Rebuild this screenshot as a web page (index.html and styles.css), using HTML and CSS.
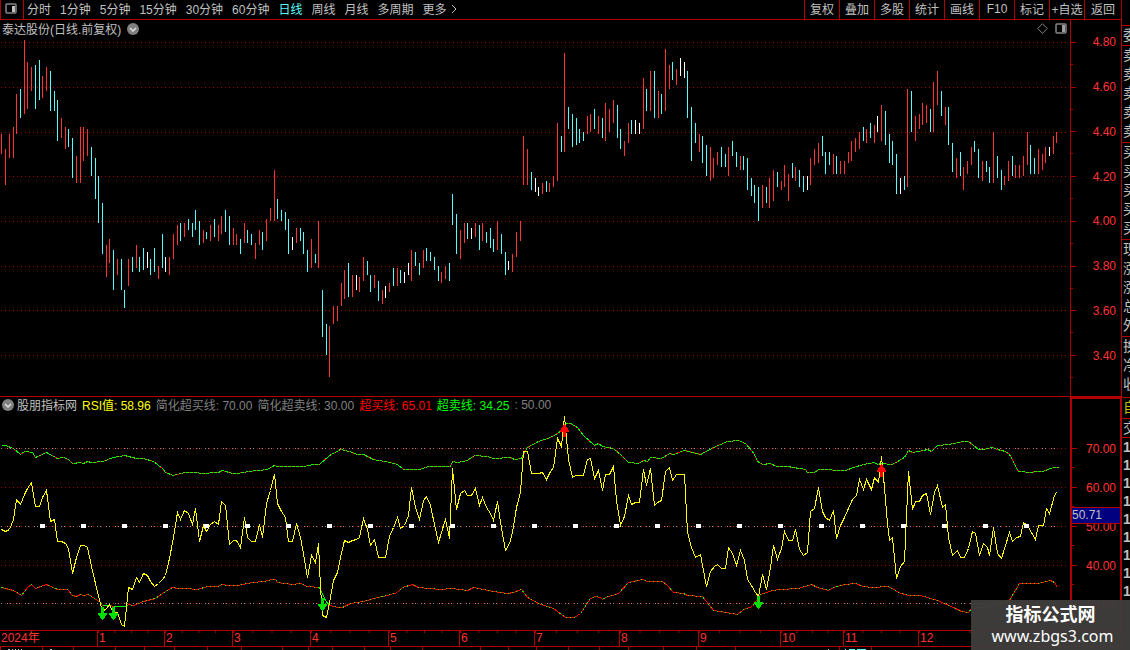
FILE: index.html
```html
<!DOCTYPE html>
<html lang="zh-CN">
    <head>
        <meta charset="utf-8">
        <title>泰达股份 日线</title>
        <link rel="stylesheet" href="styles.css">
    </head>
    <body>
        <svg class="defs">
            <symbol id="up" viewBox="0 0 9 13"><path d="M4 0H5L9 7V8H6V13H3V8H0V7Z" fill="#f00"/></symbol>
            <symbol id="down" viewBox="0 0 9 13"><path d="M3 0H6V6H9V7L5 13H4L0 7V6H3Z" fill="#00e000"/></symbol>
        </svg>
        <div class="app">
            <main>
                <nav class="toolbar">
                    <button class="layout" aria-label="布局">
                        <svg width="12" height="11"><rect x="1" y="1" width="10" height="9" rx="1" fill="none" stroke="#858585" stroke-width="1.5"/><rect x="7" y="3" width="3" height="6" fill="#c0c0c0"/></svg>
                    </button>
                    <div class="periods">
                        <button>分时</button>
                        <button>1分钟</button>
                        <button>5分钟</button>
                        <button>15分钟</button>
                        <button>30分钟</button>
                        <button>60分钟</button>
                        <button class="active">日线</button>
                        <button>周线</button>
                        <button>月线</button>
                        <button>多周期</button>
                        <button class="more">更多<svg width="6" height="10"><path d="M1 1L5 5L1 9" fill="none" stroke="#c0c0c0"/></svg></button>
                    </div>
                    <div class="tools">
                        <button>复权</button>
                        <button>叠加</button>
                        <button>多股</button>
                        <button>统计</button>
                        <button>画线</button>
                        <button>F10</button>
                        <button>标记</button>
                        <button>+自选</button>
                        <button>返回</button>
                    </div>
                </nav>

                <section class="panel price">
                    <div class="plot">
                        <div class="title">
                            <h1>泰达股份(日线.前复权)</h1>
                            <svg width="12" height="12"><circle cx="6" cy="6" r="6" fill="#808080"/><path d="M3 5L6 8L9 5" fill="none" stroke="#e0e0e0" stroke-width="1.5"/></svg>
                            <div class="icons">
                                <svg width="11" height="11"><path d="M5.5 .7L10.3 5.5L5.5 10.3L.7 5.5Z" fill="none" stroke="#858585"/></svg>
                                <svg width="12" height="11"><rect x="1" y="1" width="10" height="9" rx="1" fill="none" stroke="#858585" stroke-width="1.5"/><rect x="7" y="2" width="3" height="7" fill="#a0a0a0"/></svg>
                            </div>
                        </div>
                        <svg class="chart k" viewBox="0 40 1070 356" preserveAspectRatio="none">
                            <path class="grid" transform="translate(0 .5)" d="M1 42H1068M1 87H1068M1 132H1068M1 176H1068M1 221H1068M1 266H1068M1 310H1068M1 355H1068"/>
                            <g transform="translate(.5 0)">
                                <path class="rise" d="M1 134V154M5 149V185M9 134V158M13 127V158M16 94V134M24 40V114M27 62V109M31 67V91M42 76V98M46 67V91M61 118V138M65 127V149M76 156V183M80 127V183M83 127V161M87 129V156M106 245V277M109 239V263M117 259V275M128 259V286M136 245V268M158 266V279M169 257V275M173 234V259M177 225V245M184 223V237M203 230V243M210 225V241M218 225V241M221 216V234M233 228V245M236 234V245M244 223V243M255 243V259M259 230V245M266 219V241M270 208V221M274 170V221
                                M296 228V243M311 239V268M318 221V268M329 326V377M333 306V324M337 306V321M341 283V306M344 270V299M352 275V297M359 277V292M363 257V281M374 275V288M382 290V304M389 283V292M397 268V286M411 250V281M423 250V268M441 272V283M445 266V279M460 230V259M464 223V243M475 223V237M482 223V241M497 221V250M512 254V272M516 232V257M520 221V241M523 136V185M527 149V185M542 183V194M549 183V192M553 176V187M557 123V181
                                M564 53V152M587 116V134M590 114V132M598 116V134M605 103V141M609 109V132M613 100V123M624 141V156M628 123V143M643 78V129M650 71V111M658 91V118M665 49V111M669 65V89M676 69V85M699 134V152M710 147V181M713 158V178M717 152V165M728 147V176M740 156V170M762 185V208M769 178V208M773 170V201M781 181V190M784 165V187M788 174V201M795 167V181M810 158V185M814 149V165M818 143V163
                                M833 154V174M840 161V174M844 161V174M848 152V163M851 141V161M855 138V152M859 132V149M866 129V143M874 125V143M881 105V141M907 89V187M915 116V141M919 114V129M922 103V125M926 105V123M933 82V132M937 71V105M945 107V125M956 158V178M963 167V190M967 161V174M971 147V165M982 161V181M993 132V183M1004 176V185M1008 161V181M1015 165V178M1019 165V178M1023 156V176M1027 132V165M1038 149V174M1042 154V170M1045 147V163M1053 136V154M1056 132V143"/>
                                <path class="fall" d="M20 89V118M35 65V109M39 60V100M50 71V111M54 91V111M57 100V141M68 129V147M72 138V178M91 147V176M95 158V199M98 176V223M102 203V254M113 250V290M121 259V290M124 290V308M132 257V272M139 257V272M143 248V270M150 259V275M154 248V272M162 234V268M180 223V241M188 219V230M192 223V237M195 210V230M199 221V245M206 232V239M214 219V237M225 210V232M229 216V245M240 239V254M247 230V243M251 234V245M262 232V250M277 199V219
                                M281 210V221M285 212V230M288 219V254M300 228V241M303 232V254M307 250V272M315 254V263M322 290V337M326 324V355M348 263V297M367 261V275M370 275V292M378 281V301M393 268V286M400 270V283M415 252V266M419 263V275M426 248V261M430 252V261M434 257V270M438 266V281M449 263V281M452 194V225M456 214V254M467 223V239M479 225V250M486 232V243M490 228V248M493 239V252M501 234V254M505 252V275M531 172V190M546 181V192
                                M561 136V152M568 107V129M572 114V147M576 118V145M579 129V143M583 132V141M594 109V129M602 118V138M617 105V138M620 129V149M631 120V134M646 89V111M654 71V118M661 94V114M672 62V80M687 71V118M691 107V161M695 123V143M702 136V163M706 145V176M721 147V167M725 154V167M732 141V156M736 152V167M743 156V170M747 158V190M751 178V196M754 185V203M758 187V221M766 187V203M777 172V187M792 163V178M799 170V187M803 176V192
                                M822 136V156M825 152V174M829 152V165M836 156V174M863 127V141M870 123V138M885 111V145M889 134V163M892 141V165M896 154V194M904 176V190M911 91V132M930 109V132M941 91V116M948 107V145M952 143V172M960 152V176M974 141V152M978 149V178M986 161V172M989 167V183M997 156V178M1001 170V190M1012 156V176M1030 145V174M1034 158V174"/>
                                <path class="flat" d="M147 252V268M165 257V272M292 237V250M356 275V290M385 286V298M404 272V283M408 263V275M471 228V239M508 261V270M535 178V192M538 187V196M635 120V134M639 123V134M680 58V76M684 62V78M807 176V190M877 116V132M900 178V194M1049 147V156"/>
                            </g>
                        </svg>
                    </div>
                    <ul class="axis">
                        <li>4.80</li>
                        <li>4.60</li>
                        <li>4.40</li>
                        <li>4.20</li>
                        <li>4.00</li>
                        <li>3.80</li>
                        <li>3.60</li>
                        <li>3.40</li>
                    </ul>
                </section>

                <section class="panel rsi">
                    <div class="plot">
                        <div class="legend">
                            <svg width="12" height="12"><circle cx="6" cy="6" r="6" fill="#808080"/><path d="M3 5L6 8L9 5" fill="none" stroke="#e0e0e0" stroke-width="1.5"/></svg>
                            <h2>股朋指标网</h2>
                            <span class="yellow">RSI值: 58.96</span>
                            <span>简化超买线: 70.00</span>
                            <span>简化超卖线: 30.00</span>
                            <span class="red">超买线: 65.01</span>
                            <span class="green">超卖线: 34.25</span>
                            <span>: 50.00</span>
                        </div>
                        <svg class="chart r" viewBox="0 414 1070 216" preserveAspectRatio="none">
                            <g transform="translate(.5 .5)">
                                <path class="grid" transform="translate(-.5 0)" d="M1 448H1068M1 487H1068M1 526H1068M1 565H1068M1 603H1068"/>
                                <path class="level" transform="translate(-.5 0)" d="M1 448H1057M1 526H1057M1 603H1057"/>
                                <g class="over">
                                    <polyline id="top" points="1,445 5,445 13,448 20,454 24,451 32,452 35,457 46,452 57,458 63,457 68,459 72,463 80,462 83,463 87,461 91,462 102,461 113,457 124,455 136,458 143,458 153,461 162,468 165,472 173,475 184,472 197,472 200,473 218,472 222,470 232,473 237,473 248,471 267,469 274,465 277,466 303,466 313,464 319,464 329,455 340,449 349,451 357,454 363,454 373,459 390,462 397,464 403,469 419,469 428,466 450,466 452,461 457,462 467,460 474,455 487,456 493,458 510,457 514,459 521,458 524,452 527,447 538,441 550,437 557,433 561,430 565,423 570,423 577,427 583,435 594,445 598,443 602,446 613,448 621,455 628,462 638,463 643,460 647,461 650,457 661,458 669,453 673,454 684,450 700,454 713,447 727,441 738,440 745,443 752,451 758,462 763,464 769,463 777,466 787,466 805,469 807,472 814,472 818,469 845,470 853,467 863,464 874,462 877,464 881,463 892,464 904,457 908,450 912,452 923,450 927,449 931,451 937,445 948,444 963,441 968,441 978,449 983,449 992,447 997,449 1005,451 1009,454 1018,471 1031,472 1035,471 1042,471 1053,467 1058,467"/>
                                    <use class="dash" href="#top"/>
                                </g>
                                <g class="under">
                                    <polyline id="low" points="1,587 13,590 21,595 27,587 31,584 35,588 46,584 57,589 67,589 72,595 76,596 80,594 83,595 88,594 100,602 102,605 110,605 113,606 125,606 128,604 133,605 143,601 155,598 165,591 172,587 178,588 185,588 197,589 207,586 217,586 222,584 227,585 237,585 252,582 263,581 272,579 275,579 277,582 292,584 300,583 307,586 319,587 325,600 329,605 338,607 342,607 350,603 363,601 377,597 383,596 397,592 402,587 412,584 418,587 440,589 452,588 467,590 473,587 493,591 507,593 513,592 521,589 527,597 538,603 553,608 565,617 574,617 580,613 590,598 595,596 600,597 602,599 605,597 618,593 628,582 642,579 647,581 662,581 667,585 673,592 683,593 687,595 702,596 713,610 737,614 743,609 752,606 760,594 772,590 780,589 798,588 811,584 817,587 828,590 833,587 844,584 855,583 863,586 872,587 887,586 892,588 898,592 908,595 920,595 937,600 953,607 961,611 968,612 971,608 990,606 1009,600 1019,583 1037,583 1050,580 1054,582 1057,587"/>
                                    <use class="dash" href="#low"/>
                                    <path class="flatline" d="M102 605H110M113 606H125M319 587L325 600L329 605"/>
                                </g>
                                <polyline class="value" points="1,529 5,531 9,529 13,519 16,499 20,504 24,494 27,488 31,482 35,506 39,506 42,497 46,490 50,521 54,519 57,541 61,541 65,543 68,548 72,573 76,557 80,545 84,545 87,547 91,566 95,583 98,596 102,611 106,608 109,604 113,613 117,612 121,624 124,626 128,587 132,589 136,577 139,582 143,573 147,575 150,581 154,586 158,583 162,579 165,575 169,558 173,537 177,512 180,519 184,510 188,513 192,524 195,508 199,541 203,525 206,531 210,524 214,521 218,524 221,501 225,505 229,544 233,540 236,540 240,547 244,517 247,537 251,541 255,541 259,524 262,537 266,503 270,490 274,474 277,503 281,511 285,517 288,541 292,541 296,523 300,537 303,553 307,577 311,555 315,562 318,543 320,587 322,615 326,617 329,602 333,580 337,572 340,557 344,540 348,542 352,540 356,539 359,537 363,518 367,529 370,545 374,539 378,557 385,557 389,536 393,527 397,517 400,528 404,525 408,515 411,487 415,507 419,519 423,500 426,496 430,505 434,524 438,542 441,532 445,519 449,538 452,468 456,509 460,493 464,490 467,495 471,495 475,488 479,505 482,497 486,507 490,513 493,520 497,501 501,528 505,550 509,543 512,532 516,507 520,492 523,451 527,451 531,473 538,473 542,472 546,479 550,471 553,467 557,438 561,446 564,416 568,459 572,477 575,475 583,475 587,459 590,458 594,478 598,470 602,490 605,474 609,474 613,466 616,500 620,525 624,516 628,495 631,504 635,502 639,502 643,469 646,485 650,468 654,505 657,502 661,500 665,471 669,467 672,480 676,474 684,474 687,532 691,547 695,557 700,554 702,565 706,586 710,571 714,566 717,564 721,568 725,568 728,547 732,553 736,565 740,550 744,560 747,579 751,585 755,592 758,596 762,574 766,589 770,567 773,545 777,559 781,548 784,531 788,540 792,540 795,529 799,549 803,555 807,552 810,511 814,508 818,487 822,511 825,517 829,520 833,510 836,538 840,525 844,517 848,508 852,499 856,495 859,479 863,489 866,479 871,489 874,477 878,482 881,456 884,487 887,523 889,540 892,537 896,578 900,566 904,561 908,471 912,509 915,501 919,501 922,495 926,493 930,514 934,492 937,485 942,507 945,504 948,537 952,555 957,550 960,557 964,557 968,548 972,531 975,533 979,555 983,543 987,547 989,555 993,527 997,553 1001,558 1009,532 1012,541 1016,537 1020,536 1023,522 1027,525 1035,539 1038,525 1043,525 1046,508 1049,513 1054,495 1056,492"/>
                            </g>
                            <path class="mid" d="M40 526H1056"/>
                            <use href="#up" x="560" y="424" width="9" height="13"/>
                            <use href="#up" x="877" y="464" width="9" height="13"/>
                            <use href="#down" x="98" y="607" width="9" height="13"/>
                            <use href="#down" x="109" y="607" width="9" height="13"/>
                            <use href="#down" x="318" y="598" width="9" height="13"/>
                            <use href="#down" x="754" y="596" width="9" height="13"/>
                        </svg>
                    </div>
                    <div class="axisbox">
                        <ul class="axis">
                            <li>70.00</li>
                            <li>60.00</li>
                            <li>50.00</li>
                            <li>40.00</li>
                            <li>30.00</li>
                        </ul>
                        <div class="cursor">50.71</div>
                    </div>
                </section>

                <ol class="months">
                    <li>2024年</li>
                    <li>1</li>
                    <li>2</li>
                    <li>3</li>
                    <li>4</li>
                    <li>5</li>
                    <li>6</li>
                    <li>7</li>
                    <li>8</li>
                    <li>9</li>
                    <li>10</li>
                    <li>11</li>
                    <li>12</li>
                </ol>
                <svg class="tabs" viewBox="0 0 1121 3" preserveAspectRatio="none">
                    <path transform="translate(.5 0)" stroke="#b00000" d="M0 0V3M42 0V3M73 0V3M115 0V3M144 0V3M174 0V3M207 0V3M241 0V3M282 0V3M308 0V3M332 0V3M364 0V3M390 0V3M422 0V3M480 0V3M508 0V3M536 0V3M568 0V3M599 0V3M628 0V3M663 0V3M696 0V3M735 0V3M839 0V3M871 0V3"/>
                    <path stroke="#c0c0c0" d="M8 2.5H10M12 2.5H13M15 2.5H16M18 2.5H19M21 2.5H22M50 2.5H52M828 2.5H829"/>
                    <path stroke="#54fcfc" d="M845 2.5H846M849 2.5H855M857 2.5H866"/>
                </svg>
            </main>

            <aside>
                <div class="first">委</div>
                <div>卖<br>卖<br>卖<br>卖<br>卖</div>
                <div>买<br>买<br>买<br>买<br>买</div>
                <div>现<br>涨<br>涨<br>总<br>外</div>
                <div class="three">换<br>净<br>收</div>
                <div class="self">自</div>
                <div class="deal">交</div>
                <p>1<br>1<br>1<br>1<br>1<br>1<br>1<br>1<br>1</p>
            </aside>
        </div>
        <div class="watermark">
            <b>指标公式网</b>
            <span>www.zbgs3.com</span>
        </div>
    </body>
</html>
```
FILE: styles.css
```css
*{
    margin: 0;
    padding: 0;
    box-sizing: border-box;
}
body{
    background-color: #000;
    color: #c0c0c0;
    font-family: "Liberation Sans", "Noto Sans CJK SC", sans-serif;
    font-size: 12px;
    overflow: hidden;
}
h1, h2{
    font-size: 12px;
    font-weight: normal;
}
ul, ol{
    list-style: none;
}
svg{
    display: block;
    flex: none;
}
button{
    background: none;
    border: none;
    color: inherit;
    font: inherit;
    white-space: nowrap;
    cursor: pointer;
}
.defs{
    width: 0;
    height: 0;
    position: absolute;
}
.app{
    display: flex;
    height: 100vh;
}
main{
    flex: 1;
    min-width: 0;
}

/* top bar */
.toolbar{
    display: flex;
    height: 20px;
    border-bottom: 1px solid #b00000;
    border-left: 1px solid #b00000;
}
.toolbar button{
    padding-bottom: 2px;
}
.toolbar .layout{
    width: 23px;
    padding-left: 4px;
    border-right: 1px solid #b00000;
}
.periods{
    display: flex;
    flex: 1;
    gap: 9px;
    padding-left: 3px;
}
.periods .active{
    color: #54fcfc;
}
.more{
    display: flex;
    align-items: center;
    gap: 4px;
}
.tools{
    display: flex;
}
.tools button{
    width: 35px;
    border-left: 1px solid #b00000;
}
.tools button:last-child{
    width: 37px;
}

/* charts */
.panel{
    display: flex;
}
.plot{
    flex: 1;
    min-width: 0;
}
.title{
    display: flex;
    align-items: center;
    gap: 6px;
    height: 20px;
    padding: 0 3px 3px 2px;
}
.icons{
    display: flex;
    gap: 7px;
    margin-left: auto;
}
.chart{
    width: 100%;
    fill: none;
    shape-rendering: crispEdges;
}
.k{
    height: 356px;
}
.r{
    height: 216px;
}
.grid{
    stroke: #a00000;
    stroke-dasharray: 1 3;
}
.level{
    stroke: #909090;
    stroke-dasharray: 1 5 1 2;
}
.rise{
    stroke: #ff3232;
}
.fall{
    stroke: #54fcfc;
}
.flat{
    stroke: #fff;
}
.over{
    stroke: #f00;
}
.over .dash{
    stroke: #0f0;
    stroke-dasharray: 3 1;
}
.under{
    stroke: #f00;
}
.under .dash{
    stroke: #0f0;
    stroke-dasharray: 1 3;
}
.flatline{
    stroke: #0f0;
}
.value{
    stroke: #ff0;
}
.mid{
    stroke: #fff;
    stroke-width: 4;
    stroke-dasharray: 5 36;
}
.legend{
    display: flex;
    align-items: center;
    gap: 5px;
    height: 17px;
    padding: 0 0 2px 2px;
    color: #808080;
    white-space: nowrap;
}
.legend h2{
    color: #c0c0c0;
    margin-left: -2px;
}
.legend .yellow{
    color: #ff0;
}
.legend .red{
    color: #f00;
}
.legend .green{
    color: #0f0;
}

/* scales */
.axis li{
    display: flex;
    align-items: center;
    justify-content: flex-end;
    flex: 1;
    padding-right: 5px;
    color: #ff3232;
    background: linear-gradient(#b00000, #b00000) 0 50% / 5px 1px no-repeat,
        linear-gradient(#b00000, #b00000) 0 100% / 2px 1px no-repeat;
}
.axis{
    display: flex;
    flex-direction: column;
}
.price{
    border-bottom: 1px solid #b00000;
}
.price .axis{
    width: 51px;
    border-left: 1px solid #b00000;
    padding-bottom: 18px;
}
.axisbox{
    position: relative;
    width: 51px;
    border: 2px solid #b00000;
    border-right-width: 1px;
    border-bottom: none;
    padding-top: 30px;
}
.axisbox .axis{
    height: 195px;
}
.axisbox li{
    padding-right: 4px;
}
.cursor{
    position: absolute;
    top: 108px;
    left: 0;
    right: 0;
    height: 17px;
    line-height: 15px;
    background-color: #000080;
    border-top: 1px solid #b00000;
    border-bottom: 1px solid #b00000;
}
.rsi{
    height: 233px;
}
.months{
    display: grid;
    grid-template-columns: 97fr 67fr 68fr 78fr 78fr 71fr 75fr 85fr 79fr 82fr 63fr 75fr 203fr;
    height: 17px;
    border-top: 1px solid #b00000;
    border-bottom: 1px solid #b00000;
}
.months li{
    line-height: 15px;
    padding-left: 1px;
    color: #ff3232;
    border-left: 1px solid #b00000;
    background: linear-gradient(90deg, #b00000 1px, transparent 1px) 0 0 / 25% 2px repeat-x;
}
.months li:first-child{
    border: none;
    background: none;
}
.tabs{
    width: 100%;
    height: 3px;
    shape-rendering: crispEdges;
}

/* quote column, cut off by the window edge */
aside{
    width: 9px;
    padding-top: 25px;
    border-left: 1px solid #b00000;
    overflow: hidden;
    font-size: 14px;
    line-height: 19px;
    white-space: nowrap;
}
aside div{
    height: 97px;
    padding-left: 1px;
    border-top: 1px solid #b00000;
}
aside .first{
    height: 20px;
}
aside .three{
    height: 61px;
}
aside .self{
    height: 21px;
    color: #c0c000;
}
aside .deal{
    height: 19px;
}
aside p{
    padding-left: 1px;
    border-top: 1px solid #b00000;
    font-weight: bold;
    line-height: 18px;
}
.watermark{
    position: absolute;
    right: 0;
    bottom: 0;
    width: 159px;
    height: 50px;
    display: flex;
    flex-direction: column;
    align-items: center;
    justify-content: center;
    background-color: rgba(64, 60, 60, 0.96);
    color: #fff;
}
.watermark b{
    font-size: 18px;
    line-height: 22px;
}
.watermark span{
    padding-left: 4px;
    font-family: "Noto Sans", sans-serif;
    font-size: 16px;
    line-height: 20px;
}
```
